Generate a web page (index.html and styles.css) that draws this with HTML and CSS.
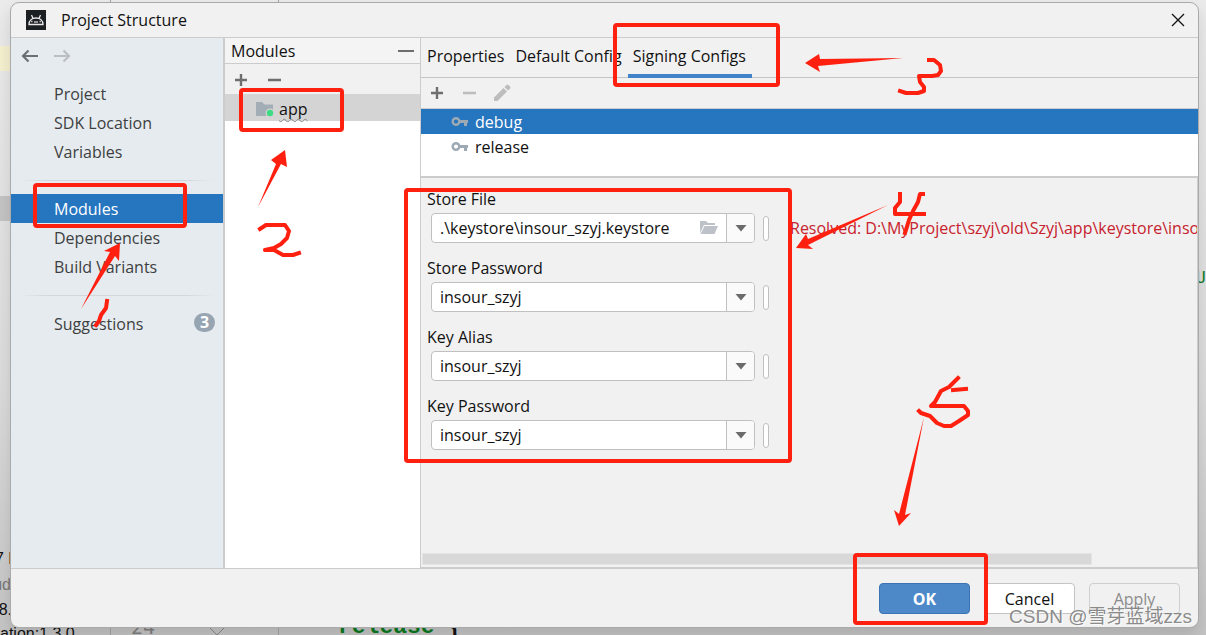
FILE: index.html
```html
<!DOCTYPE html>
<html lang="en">
<head>
<meta charset="utf-8">
<title>Project Structure</title>
<link rel="stylesheet" href="styles.css">
</head>
<body>
<div class="editor" aria-hidden="true">
  <div class="editor-left"><span class="line-mark"></span><span class="line-gray"></span></div>
  <div class="gutter"></div>
  <span class="code code-a">7 l</span>
  <span class="code code-b">ud</span>
  <span class="code code-c">8.</span>
  <span class="code code-d">ation:1.3.0</span>
  <span class="code code-num">24</span>
  <svg class="fold" width="18" height="10" viewBox="0 0 18 10"><path d="M1 0L9 8L17 0" fill="none" stroke="#888"/></svg>
  <span class="code code-release">release <b>{</b></span>
  <span class="code code-u">U</span>
</div>

<main class="dialog">
  <header class="titlebar">
    <svg class="app-icon" width="20" height="20" viewBox="0 0 20 20"><rect width="20" height="20" fill="#1d2023"/><path d="M3 14.500C3 10.500 6 8 10 8S17 10.500 17 14.500ZM5.500 5L7 8.500M14.500 5L13 8.500" fill="none" stroke="#e8e8e8" stroke-width="1.300"/><path d="M5 11.500H6.500M13.500 11.500H15M8 12H12" stroke="#bbb" stroke-width="1.300"/></svg>
    <h1>Project Structure</h1>
    <button class="close" aria-label="Close"><svg width="14" height="14" viewBox="0 0 14 14"><path d="M1 1L13 13M13 1L1 13" stroke="#111" stroke-width="1.300"/></svg></button>
  </header>

  <div class="content">
    <nav class="sidebar">
      <div class="history">
        <button aria-label="Back"><svg width="18" height="14" viewBox="0 0 18 14"><path d="M17 7H2M7.500 1.500L2 7L7.500 12.500" fill="none" stroke="#6c6f73" stroke-width="2.200"/></svg></button>
        <button aria-label="Forward"><svg width="18" height="14" viewBox="0 0 18 14"><path d="M0 7H15M9.500 1.500L15 7L9.500 12.500" fill="none" stroke="#bcbfc2" stroke-width="2.200"/></svg></button>
      </div>
      <a href="#project">Project</a>
      <a href="#sdk">SDK Location</a>
      <a href="#variables">Variables</a>
      <hr>
      <a href="#modules" class="active">Modules</a>
      <a href="#dependencies">Dependencies</a>
      <a href="#variants">Build Variants</a>
      <hr>
      <a href="#suggestions">Suggestions<span class="badge">3</span></a>
    </nav>

    <section class="modules">
      <div class="modules-head"><h2>Modules</h2><button aria-label="Hide"><svg width="16" height="4" viewBox="0 0 16 4"><path d="M0 2H16" stroke="#6e6e6e" stroke-width="2"/></svg></button></div>
      <div class="modules-tools">
        <button aria-label="Add module"><svg width="14" height="14" viewBox="0 0 14 14"><path d="M7 1V13M1 7H13" stroke="#6e6e6e" stroke-width="2.400"/></svg></button>
        <button aria-label="Remove module"><svg width="14" height="14" viewBox="0 0 14 14"><path d="M1 7H14" stroke="#6e6e6e" stroke-width="2.400"/></svg></button>
      </div>
      <div class="module-row">
        <svg width="20" height="18" viewBox="0 0 20 18"><path d="M1 2H7L9.500 4.500H18V16H1Z" fill="#a2adb6"/><circle cx="15" cy="13" r="4.500" fill="#d4d4d4"/><circle cx="15" cy="13" r="3.200" fill="#3ddc84"/></svg>
        <span class="squiggle">app</span>
      </div>
    </section>

    <section class="details">
      <div class="tabs" role="tablist">
        <button role="tab">Properties</button>
        <button role="tab">Default Config</button>
        <button role="tab" aria-selected="true" class="selected">Signing Configs</button>
      </div>
      <div class="config-tools">
        <button aria-label="Add"><svg width="14" height="14" viewBox="0 0 14 14"><path d="M7 1V13M1 7H13" stroke="#6e6e6e" stroke-width="2.400"/></svg></button>
        <button aria-label="Remove"><svg width="14" height="14" viewBox="0 0 14 14"><path d="M1 7H14" stroke="#bdbdbd" stroke-width="2.400"/></svg></button>
        <button aria-label="Edit"><svg width="18" height="18" viewBox="0 0 18 18"><path d="M0 13.500L9.500 4L13 7.500L3.500 17H0ZM10.500 3L12.500 1Q13.500 0 14.500 1L16 2.500Q17 3.500 16 4.500L14 6.500Z" fill="#bdbdbd"/></svg></button>
      </div>
      <ul class="configs">
        <li class="chosen"><svg width="18" height="12" viewBox="0 0 18 12"><circle cx="5" cy="5.500" r="3.300" fill="none" stroke="#9da9b3" stroke-width="2.400"/><path d="M8 4H17V7H16V10H13V7H8Z" fill="#9da9b3"/></svg>debug</li>
        <li><svg width="18" height="12" viewBox="0 0 18 12"><circle cx="5" cy="5.500" r="3.300" fill="none" stroke="#9da9b3" stroke-width="2.400"/><path d="M8 4H17V7H16V10H13V7H8Z" fill="#9da9b3"/></svg>release</li>
      </ul>
      <form class="form">
        <div class="field">
          <label for="store-file">Store File</label>
          <div class="field-row">
            <div class="combo"><input id="store-file" value=".\keystore\insour_szyj.keystore"><button type="button" class="browse" aria-label="Browse"><svg width="20" height="16" viewBox="0 0 20 16"><path d="M1 1H7L9 3H16V5H5L1 13ZM5.500 6H19L15.500 14H1.500Z" fill="#bcc2c7"/></svg></button><button type="button" class="drop" aria-label="Show values"><svg width="12" height="8" viewBox="0 0 12 8"><path d="M0.500 1H11.500L6 7.500Z" fill="#6b6b6b"/></svg></button></div>
            <button type="button" class="extra" aria-label="Bind variable"></button>
            <span class="error">Resolved: D:\MyProject\szyj\old\Szyj\app\keystore\insour_szyj.keystore</span>
          </div>
        </div>
        <div class="field">
          <label for="store-pass">Store Password</label>
          <div class="field-row">
            <div class="combo"><input id="store-pass" value="insour_szyj"><button type="button" class="drop" aria-label="Show values"><svg width="12" height="8" viewBox="0 0 12 8"><path d="M0.500 1H11.500L6 7.500Z" fill="#6b6b6b"/></svg></button></div>
            <button type="button" class="extra" aria-label="Bind variable"></button>
          </div>
        </div>
        <div class="field">
          <label for="key-alias">Key Alias</label>
          <div class="field-row">
            <div class="combo"><input id="key-alias" value="insour_szyj"><button type="button" class="drop" aria-label="Show values"><svg width="12" height="8" viewBox="0 0 12 8"><path d="M0.500 1H11.500L6 7.500Z" fill="#6b6b6b"/></svg></button></div>
            <button type="button" class="extra" aria-label="Bind variable"></button>
          </div>
        </div>
        <div class="field">
          <label for="key-pass">Key Password</label>
          <div class="field-row">
            <div class="combo"><input id="key-pass" value="insour_szyj"><button type="button" class="drop" aria-label="Show values"><svg width="12" height="8" viewBox="0 0 12 8"><path d="M0.500 1H11.500L6 7.500Z" fill="#6b6b6b"/></svg></button></div>
            <button type="button" class="extra" aria-label="Bind variable"></button>
          </div>
        </div>
        <div class="scrollbar"></div>
      </form>
    </section>
  </div>

  <footer class="actions">
    <button class="primary">OK</button>
    <button>Cancel</button>
    <button disabled>Apply</button>
  </footer>
</main>

<svg class="marks" width="1206" height="635" viewBox="0 0 1206 635" aria-hidden="true">
  <g fill="none" stroke="#ff2010" stroke-width="4">
    <rect x="35" y="185" width="150" height="41" rx="2"/>
    <rect x="241" y="90" width="101" height="40" rx="2"/>
    <rect x="615" y="25" width="163" height="60" rx="2"/>
    <rect x="406" y="190" width="384" height="271" rx="2"/>
    <rect x="855" y="555" width="131" height="68" rx="2"/>
  </g>
  <g fill="#ff2010">
    <path d="M81 309L110 252L104 251L120 243L119 261L115 256Z"/>
    <path d="M258 207L276 164L271 160L285 150L287 167L281 164Z"/>
    <path d="M903 58L820 59L819 54L805 63L820 72L818 66Z"/>
    <path d="M888 205L808 239L806 234L796 248L813 249L808 245Z"/>
    <path d="M924 417L899 514L894 510L899 526L911 513L905 515Z"/>
  </g>
  <g fill="none" stroke="#ff2010" stroke-width="4" stroke-linecap="square" stroke-linejoin="round">
    <path d="M107 301L106 308L101 315L99 321L96 325"/>
    <path d="M260 229L266 225H285L289 231L287 238L281 244L274 248L265 250L274 250L283 255H293L299 253"/>
    <path d="M929 60H934L940 65L941 71L938 75L932 76H919L920 82L924 87V91L918 93H906L900 91"/>
    <path d="M900 194V202L895 208L895 214H924M923 194H920L918 202L913 211L909 220L905 233"/>
    <path d="M958 378L949 387L941 391L935 402L931 406H964L968 411V415L959 421L951 426H944L937 423L930 416L921 413L919 411M953 390L966 389"/>
  </g>
</svg>
<div class="watermark">CSDN @雪芽蓝域zzs</div>
</body>
</html>
```
FILE: styles.css
```css
* { box-sizing: border-box; }
body {
  margin: 0;
  min-height: 100vh;
  padding: 2px 7px 7px 10px;
  display: flex;
  position: relative;
  overflow: hidden;
  background: #ebebeb;
  font-family: "Open Sans", "Noto Sans", sans-serif;
  font-size: 16px;
  line-height: 22px;
  color: #111;
}
button, input { font: inherit; color: inherit; }
button { padding: 0; border: 0; background: none; display: flex; align-items: center; justify-content: center; }
h1, h2 { margin: 0; font-size: 16px; font-weight: 400; }
svg { display: block; flex: none; }

/* editor window behind the dialog */
.editor { position: absolute; inset: 0; overflow: hidden; background: linear-gradient(to bottom, #ebebeb, #dcdcdc 60%, #c4c4c4); }
.editor-left { position: absolute; top: 0; bottom: 0; left: 0; width: 110px; }
.line-mark, .line-gray { position: absolute; left: 0; width: 12px; height: 25px; background: #f5f1cf; top: 46px; }
.line-gray { top: 196px; background: #c4c4c4; }
.gutter { position: absolute; top: 0; bottom: 0; left: 110px; width: 169px; border: 1px solid #a4a4a4; border-width: 0 1px; }
.code { position: absolute; line-height: 24px; white-space: pre; font-family: "Liberation Sans", sans-serif; font-size: 16px; }
.code-a { right: calc(100% - 12px); top: 547px; }
.code-b { right: calc(100% - 11px); top: 573px; color: #777; }
.code-c { right: calc(100% - 12px); top: 598px; }
.code-d { left: 0; top: 622px; }
.code-num { left: 131px; top: 615px; font-family: "DejaVu Sans Mono", monospace; font-size: 20px; color: #808080; }
.fold { position: absolute; left: 208px; top: 627px; }
.code-release { left: 338px; top: 615px; font-family: "Liberation Mono", monospace; font-size: 23px; font-weight: 700; color: #0a7a1e; }
.code-release b { color: #111; }
.code-u { left: 1196px; top: 266px; font-family: "DejaVu Sans Mono", monospace; color: #0a7a1e; }

.dialog {
  position: relative;
  flex: 1;
  min-width: 0;
  display: flex;
  flex-direction: column;
  border: 1px solid #aaa;
  border-radius: 9px;
  overflow: hidden;
  background: #f1f1f1;
  box-shadow: 0 8px 16px rgba(0, 0, 0, .12);
}
.titlebar { display: flex; align-items: center; height: 35px; padding: 0 13px 0 15px; gap: 15px; border-bottom: 1px solid #ccc; }
.close { margin-left: auto; }
.content { flex: 1; display: flex; min-height: 0; }

.sidebar { width: 214px; flex: none; background: #e6ebef; border-right: 2px solid #ccc; color: #3d3f41; }
.history { display: flex; gap: 15px; height: 41px; padding: 4px 10px; align-items: flex-start; }
.history button { height: 28px; }
.sidebar a { display: flex; align-items: center; height: 29px; padding: 0 8px 0 43px; color: inherit; text-decoration: none; }
.sidebar a.active { background: #2675bf; color: #fff; }
.sidebar hr { height: 1px; margin: 14px 8px 13px; border: 0; background: linear-gradient(to right, #e6ebef, #d3d7da 15%, #d3d7da 85%, #e6ebef); }
.badge { margin-left: auto; width: 21px; height: 19px; margin-bottom: 2px; border-radius: 10px; background: #97a4b1; color: #fff; font-weight: 700; font-size: 16px; line-height: 19px; text-align: center; }

.modules { width: 196px; flex: none; background: #fff; border-right: 1px solid #ccc; }
.modules-head { display: flex; align-items: center; justify-content: space-between; height: 26px; padding: 0 6px; background: #f4f4f4; border-bottom: 1px solid #ccc; }
.modules-tools { display: flex; align-items: center; gap: 19px; height: 30px; padding: 2px 0 0 9px; background: #f1f1f1; }
.module-row { display: flex; align-items: center; gap: 4px; height: 27px; padding: 2px 0 0 30px; background: #d4d4d4; }
.squiggle { text-decoration: underline wavy #888 1px; text-decoration-skip-ink: none; text-underline-offset: 3px; }

.details { flex: 1; min-width: 0; display: flex; flex-direction: column; }
.tabs { display: flex; height: 40px; border-bottom: 1px solid #c4c4c4; }
.tabs button { padding: 0 6px; height: 40px; border-bottom: 4px solid transparent; }
.tabs button + button { padding-left: 5px; }
.tabs .selected { border-bottom-color: #4083c9; }
.config-tools { display: flex; align-items: center; gap: 18px; height: 31px; padding-left: 9px; border-bottom: 1px solid #ccc; }
.configs { margin: 0; padding: 0; list-style: none; background: #fff; height: 67px; flex: none; }
.configs li { display: flex; align-items: center; height: 25px; padding: 0 0 0 30px; gap: 6px; }
.configs .chosen { background: #2675bf; color: #fff; }

.form { flex: 1; display: flex; flex-direction: column; gap: 15px; padding: 11px 0 2px 6px; border: solid #ccc; border-width: 2px 1px 1px 0; }
.field { display: flex; flex-direction: column; gap: 3px; }
.field label { line-height: 21px; }
.field-row { display: flex; align-items: center; gap: 8px; padding-left: 4px; overflow: hidden; }
.combo { display: flex; width: 324px; height: 30px; flex: none; border: 1px solid #c0c0c0; border-radius: 4px; background: #fff; overflow: hidden; }
.combo input { flex: 1; min-width: 0; padding: 0 0 1px 8px; border: 0; background: none; outline: 0; }
.browse { width: 34px; }
.drop { width: 28px; border-left: 1px solid #c0c0c0; background: #fafafa; }
.extra { width: 6px; height: 25px; flex: none; border: 1px solid #c0c0c0; border-radius: 3px; background: #fff; }
.error { margin-left: 13px; padding-bottom: 1px; color: #c7222d; white-space: nowrap; }
.scrollbar { width: 87%; height: 12px; margin-top: auto; margin-left: -5px; background: #d8d8d8; border: 1px solid #e4e4e4; }

.actions { display: flex; justify-content: flex-end; gap: 14px; height: 59px; padding: 14px 18px; border-top: 1px solid #ccc; }
.actions button { width: 91px; height: 31px; border: 1px solid #c4c4c4; border-radius: 4px; background: #fff; }
.actions .primary { background: #4d89c9; border-color: #3b73b3; color: #fff; font-weight: 700; }
.actions button:disabled { background: #f1f1f1; border-color: #cfcfcf; color: #8c8c8c; }

/* hand-drawn notes over the dialog */
.marks { position: absolute; left: 0; top: 0; pointer-events: none; }
.watermark { position: absolute; right: 14px; bottom: 5px; font-family: "Liberation Sans", "Noto Sans CJK SC", sans-serif; font-size: 19px; line-height: 26px; color: rgba(110, 110, 110, .8); text-shadow: 1px 1px 0 rgba(255, 255, 255, .7); white-space: nowrap; }
```
